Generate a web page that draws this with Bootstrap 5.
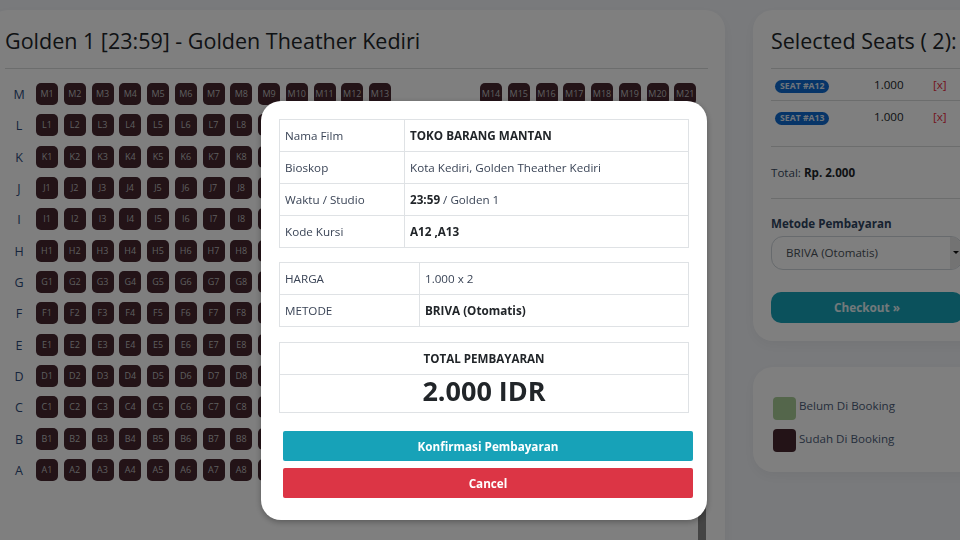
<!DOCTYPE html>
<html lang="id">
<head>
<meta charset="utf-8">
<title>Checkout</title>
<link href="https://cdn.jsdelivr.net/npm/bootstrap@5.3.0/dist/css/bootstrap.min.css" rel="stylesheet">
<style>
html,body{height:540px;overflow:hidden}
body{background:#f3f5f9;font-family:"Open Sans",sans-serif;font-size:13px;color:#212529}
.stage{width:1040px;margin-left:-12px;padding-top:10px;gap:28px}
.panel{background:#fff;border-radius:20px;box-shadow:0 4px 14px rgba(0,0,0,.05)}
.panel-left{width:737px;height:640px;padding:15px 17px 0}
.side{width:275px;gap:26px}
.panel-seats{padding:15px 18px 0;height:331px}
.panel-legend{height:105px;padding:30px 20px 0}
.ttl{font-size:21.5px;font-weight:400;line-height:32px;height:43px;margin:0;color:#212529;white-space:nowrap}
.rule{height:1px;background:#d9dadb;margin:0}
.seat-rows{padding-top:14px;height:412px}
.seat-row{height:31.34px;align-items:flex-start}
.row-tag{width:31px;font-size:12.5px;color:#2c4a7a;text-align:center;line-height:24px;flex:none;padding-right:3px}
.seat{width:22px;height:22px;margin-right:5.75px;flex:none;background:#46262f;color:#bdbdbd;border-radius:5px;font-size:9px;line-height:22px;text-align:center;white-space:nowrap}
.seat-gap{width:83.25px;flex:none}
.track{width:8px;height:128px;background:#888;margin:20px 0 0 693px}
.pick{height:31px;width:205px;align-items:center}
.pick-tag{width:103px;padding-left:4px}
.pick-price{width:59px;font-size:11.6px;color:#212529}
.pick-x{color:#e8293c;font-size:11.6px}
.pill{background:#0f6ad0;color:#dfe9f5;font-size:8.7px;font-weight:700;border-radius:8px;padding:0 5px;line-height:13px;display:inline-block;white-space:nowrap}
.sum{height:51px;line-height:51px;color:#3a4a5e;font-size:11.6px}
.sum b{font-size:11.6px;color:#212529}
.lbl{font-size:11.6px;font-weight:700;color:#2f4460;margin:16px 0 4px;line-height:17px}
.picker{height:34px;border:1px solid #ced4da;border-radius:12px;color:#495057;font-size:11.6px;width:192px;padding-left:14px;overflow:hidden}
.picker-arrow{width:12px;margin-left:auto;background:#e6e6e6;height:32px;padding-left:3px;align-items:center}
.tri{width:0;height:0;border-left:3px solid transparent;border-right:3px solid transparent;border-top:3.5px solid #111;margin-top:-2px}
.go{background:#17a2b8;color:#e4f3f6;font-weight:700;font-size:11.8px;border-radius:10px;height:31px;line-height:31px;text-align:center;margin-top:22px;width:192px}
.swatch{width:23px;height:23px;border-radius:4px;flex:none}
.swatch-free{background:#a9cc96}
.swatch-taken{background:#46262f}
.legend-row{height:32px;font-size:11.6px;color:#4b5c78;gap:3px;align-items:flex-start}
.legend-row span{line-height:20px}
.legend-row:first-child span{line-height:18px}
.modal-dialog.sheet{width:446px;max-width:446px;margin:101px 0 0 261px}
.sheet .modal-content{border:0;border-radius:20px;height:419px;padding:18px 18px 0;box-shadow:0 2px 6px rgba(0,0,0,.3)}
.sheet table{margin:0;font-size:11.65px;border-color:#dfe2e5;width:410px;table-layout:fixed}
.sheet td{padding:0 5px;height:32px;vertical-align:middle;color:#3a4456}
.sheet td b{color:#212529;font-size:11.7px}
.c1{width:125px}.c2{width:140px}
.gap-t{margin-top:14px!important}
.gap-u{margin-top:15px!important}
.sheet td.tot{color:#212529;font-size:11.6px;font-weight:700;text-align:center}
.sheet td.amt{color:#212529;font-size:27px;font-weight:700;text-align:center;height:38px;line-height:32px;padding-bottom:5px}
.act{display:block;width:410px;height:30px;border:0;border-radius:2px;margin-left:4px;color:#fff;font-size:11.7px;font-weight:700;line-height:28px;padding:0}
.act-a{background:#17a2b8;margin-top:18px}
.act-b{background:#dc3545;margin-top:7px}
</style>
</head>
<body>
<div class="stage d-flex">
  <div class="panel panel-left flex-none">
    <h3 class="ttl">Golden 1 [23:59] - Golden Theather Kediri</h3>
    <div class="rule"></div>
    <div class="seat-rows" id="seats"></div>
    <div class="track"></div>
  </div>
  <div class="side d-flex flex-column flex-none">
    <div class="panel panel-seats">
      <h3 class="ttl">Selected Seats ( 2):</h3>
      <div class="rule"></div>
      <div class="pick d-flex"><div class="pick-tag"><span class="pill">SEAT #A12</span></div><div class="pick-price">1.000</div><div class="pick-x">[x]</div></div>
      <div class="rule"></div>
      <div class="pick d-flex"><div class="pick-tag"><span class="pill">SEAT #A13</span></div><div class="pick-price">1.000</div><div class="pick-x">[x]</div></div>
      <div class="rule" style="margin-top:14px"></div>
      <div class="sum">Total: <b>Rp. 2.000</b></div>
      <div class="rule"></div>
      <div class="lbl">Metode Pembayaran</div>
      <div class="picker d-flex align-items-center"><span>BRIVA (Otomatis)</span><div class="picker-arrow d-flex"><div class="tri"></div></div></div>
      <div class="go">Checkout »</div>
    </div>
    <div class="panel panel-legend">
      <div class="legend-row d-flex"><div class="swatch swatch-free"></div><span>Belum Di Booking</span></div>
      <div class="legend-row d-flex"><div class="swatch swatch-taken"></div><span>Sudah Di Booking</span></div>
    </div>
  </div>
</div>

<div class="modal-backdrop show"></div>
<div class="modal show d-block" tabindex="-1">
  <div class="modal-dialog sheet">
    <div class="modal-content">
      <table class="table table-bordered">
        <tr><td class="c1">Nama Film</td><td><b>TOKO BARANG MANTAN</b></td></tr>
        <tr><td>Bioskop</td><td>Kota Kediri, Golden Theather Kediri</td></tr>
        <tr><td>Waktu / Studio</td><td><b>23:59</b> / Golden 1</td></tr>
        <tr><td>Kode Kursi</td><td><b>A12 ,A13</b></td></tr>
      </table>
      <table class="table table-bordered gap-t">
        <tr><td class="c2">HARGA</td><td>1.000 x 2</td></tr>
        <tr><td>METODE</td><td><b>BRIVA (Otomatis)</b></td></tr>
      </table>
      <table class="table table-bordered gap-u">
        <tr><td class="tot">TOTAL PEMBAYARAN</td></tr>
        <tr><td class="amt">2.000 IDR</td></tr>
      </table>
      <button class="btn act act-a" type="button">Konfirmasi Pembayaran</button>
      <button class="btn act act-b" type="button">Cancel</button>
    </div>
  </div>
</div>
<script>
var host=document.getElementById('seats'),html='';
'MLKJIHGFEDCBA'.split('').forEach(function(r){
  html+='<div class="seat-row d-flex"><div class="row-tag">'+r+'</div>';
  for(var i=1;i<=21;i++){
    html+='<div class="seat">'+r+i+'</div>';
    if(i===13)html+='<div class="seat-gap"></div>';
  }
  html+='</div>';
});
host.innerHTML=html;
</script>
<script src="https://cdn.jsdelivr.net/npm/bootstrap@5.3.0/dist/js/bootstrap.bundle.min.js"></script>
</body>
</html>
